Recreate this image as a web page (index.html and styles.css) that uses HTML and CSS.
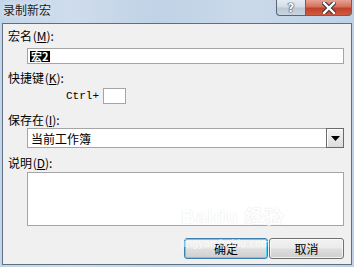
FILE: index.html
```html
<!DOCTYPE html>
<html>
<head>
<meta charset="utf-8">
<link rel="stylesheet" href="styles.css">
</head>
<body>
<div class="window">
  <div class="titlebar">
    <div class="title">录制新宏</div>
    <div class="caption-btns">
      <div class="cbtn help">?</div>
      <div class="cbtn close">
        <svg width="14" height="12" viewBox="0 0 14 12"><path d="M2 1 L12 11 M12 1 L2 11" stroke="#3a3a3a" stroke-width="4.5" stroke-linecap="square"/><path d="M2 1 L12 11 M12 1 L2 11" stroke="#fff" stroke-width="2.4" stroke-linecap="square"/></svg>
      </div>
    </div>
  </div>
  <div class="client">
    <div class="label lbl-first">宏名 (<u>M</u>):</div>
    <div class="field name-field"><span class="sel">宏2</span></div>
    <div class="label lbl-key">快捷键 (<u>K</u>):</div>
    <div class="keyrow"><span class="ctrl">Ctrl+</span><span class="keybox"></span></div>
    <div class="label lbl-store">保存在 (<u>I</u>):</div>
    <div class="select"><span class="seltext">当前工作簿</span><span class="dropbtn"><svg width="9" height="5" viewBox="0 0 9 5"><path d="M0 0 H9 L4.5 5 Z" fill="#000"/></svg></span></div>
    <div class="label lbl-desc">说明 (<u>D</u>):</div>
    <div class="field textarea"></div>
    <div class="btnrow">
      <div class="btn default">确定</div>
      <div class="btn">取消</div>
    </div>
    <div class="watermark"><span class="wm-big">Bai<span class="paw">du</span> 经验</span><span class="wm-small">jingyan.baidu.com</span></div>
  </div>
</div>
</body>
</html>
```
FILE: styles.css
```css
* { box-sizing: border-box; }
html, body { margin: 0; padding: 0; }
body {
  width: 354px;
  height: 267px;
  overflow: hidden;
  font-family: "Noto Sans CJK SC", "Liberation Sans", sans-serif;
  font-size: 12px;
  color: #000;
}
.window {
  width: 354px;
  height: 267px;
  background: linear-gradient(90deg, #c3d5e9 0%, #cfdcec 20%, #c0d2e6 45%, #cad9ea 70%, #bed1e7 100%);
  display: flex;
  flex-direction: column;
}
.titlebar {
  height: 23px;
  display: flex;
  justify-content: space-between;
  align-items: flex-start;
}
.title {
  padding: 2px 0 0 3px;
  font-size: 12px;
  line-height: 16px;
  color: #1a1a1a;
  text-shadow: 0 0 6px rgba(255,255,255,0.9);
}
.caption-btns {
  display: flex;
  margin-right: 2px;
}
.cbtn {
  height: 16px;
  border: 1px solid #5a6575;
  border-top: none;
  display: flex;
  align-items: center;
  justify-content: center;
}
.help {
  width: 29px;
  border-radius: 0 0 0 4px;
  border-right: none;
  background: linear-gradient(180deg, #e4ebf3 0%, #d3dce8 45%, #bcc8d6 55%, #c9d4e1 100%);
  font-family: "DejaVu Sans", sans-serif;
  font-size: 12px;
  font-weight: bold;
  color: #fff;
  line-height: 14px;
  text-shadow: 0 0 1px #333, 0 0 1px #333, 0 0 1px #333;
}
.close {
  width: 47px;
  border-radius: 0 0 4px 0;
  background: linear-gradient(180deg, #e8a292 0%, #d7705d 45%, #c1412c 55%, #cf5a3f 100%);
}
.client {
  position: relative;
  flex: 1;
  margin: 0 2px 2px 2px;
  border: 1px solid #5f6e80;
  background: #f0f0f0;
  padding: 5px 7px 0 5px;
  display: flex;
  flex-direction: column;
}
.label {
  height: 14px;
  line-height: 14px;
  font-size: 12px;
  word-spacing: -2px;
}
.label u { text-decoration: underline; }
.field {
  margin-left: 19px;
  border: 1px solid #a5a5a5;
  background: #fff;
}
.name-field {
  margin-top: 5px;
  height: 16px;
  padding: 0 0 0 2px;
  display: flex;
  align-items: center;
}
.sel {
  background: #000;
  color: #fff;
  font-size: 11px;
  line-height: 11px;
  height: 11px;
  font-weight: bold;
  padding: 0 1px;
}
.lbl-key { margin-top: 7px; }
.keyrow {
  margin-top: 3px;
  height: 16px;
  display: flex;
  align-items: center;
  padding-left: 58px;
}
.ctrl {
  font-family: "Liberation Mono", "DejaVu Sans Mono", monospace;
  font-size: 11px;
  margin-right: 4px;
}
.keybox {
  width: 23px;
  height: 16px;
  border: 1px solid #a5a5a5;
  background: #fff;
}
.lbl-store { margin-top: 9px; }
.select {
  margin-top: 1px;
  margin-left: 19px;
  height: 20px;
  border: 1px solid #a5a5a5;
  background: #fff;
  display: flex;
  align-items: center;
  justify-content: space-between;
}
.seltext {
  padding-left: 3px;
  font-size: 12px;
}
.dropbtn {
  width: 18px;
  height: 20px;
  margin-right: -1px;
  border: 1px solid #6a6a6a;
  background: linear-gradient(180deg, #f4f4f4, #dcdcdc);
  display: flex;
  align-items: center;
  justify-content: center;
  box-shadow: inset 1px 1px 0 #fff;
}
.lbl-desc { margin-top: 8px; }
.textarea {
  margin-top: 2px;
  height: 54px;
}
.btnrow {
  margin-top: 12px;
  display: flex;
  justify-content: flex-end;
  gap: 1px;
}
.btn {
  width: 75px;
  height: 21px;
  border: 1px solid #707070;
  border-radius: 3px;
  background: linear-gradient(180deg, #f2f2f2 0%, #ebebeb 45%, #dddddd 55%, #cfcfcf 100%);
  display: flex;
  align-items: center;
  justify-content: center;
  font-size: 12px;
  box-shadow: inset 0 0 0 1px rgba(255,255,255,0.7);
}
.btn.default {
  width: 84px;
  border-color: #3c7fb1;
  box-shadow: inset 0 0 0 1px #48d8fb;
}
.watermark {
  position: absolute;
  left: 178px;
  top: 182px;
  color: #fff;
  opacity: 0.8;
  display: flex;
  flex-direction: column;
  align-items: flex-start;
  pointer-events: none;
}
.wm-big {
  font-family: "Liberation Sans", sans-serif;
  font-weight: bold;
  font-size: 19px;
  line-height: 22px;
  letter-spacing: 1px;
  text-shadow: 0 0 1px #ccc;
}
.wm-small {
  font-family: "Liberation Sans", sans-serif;
  font-size: 10px;
  line-height: 12px;
  margin-top: 10px;
  letter-spacing: 0.5px;
}
```
